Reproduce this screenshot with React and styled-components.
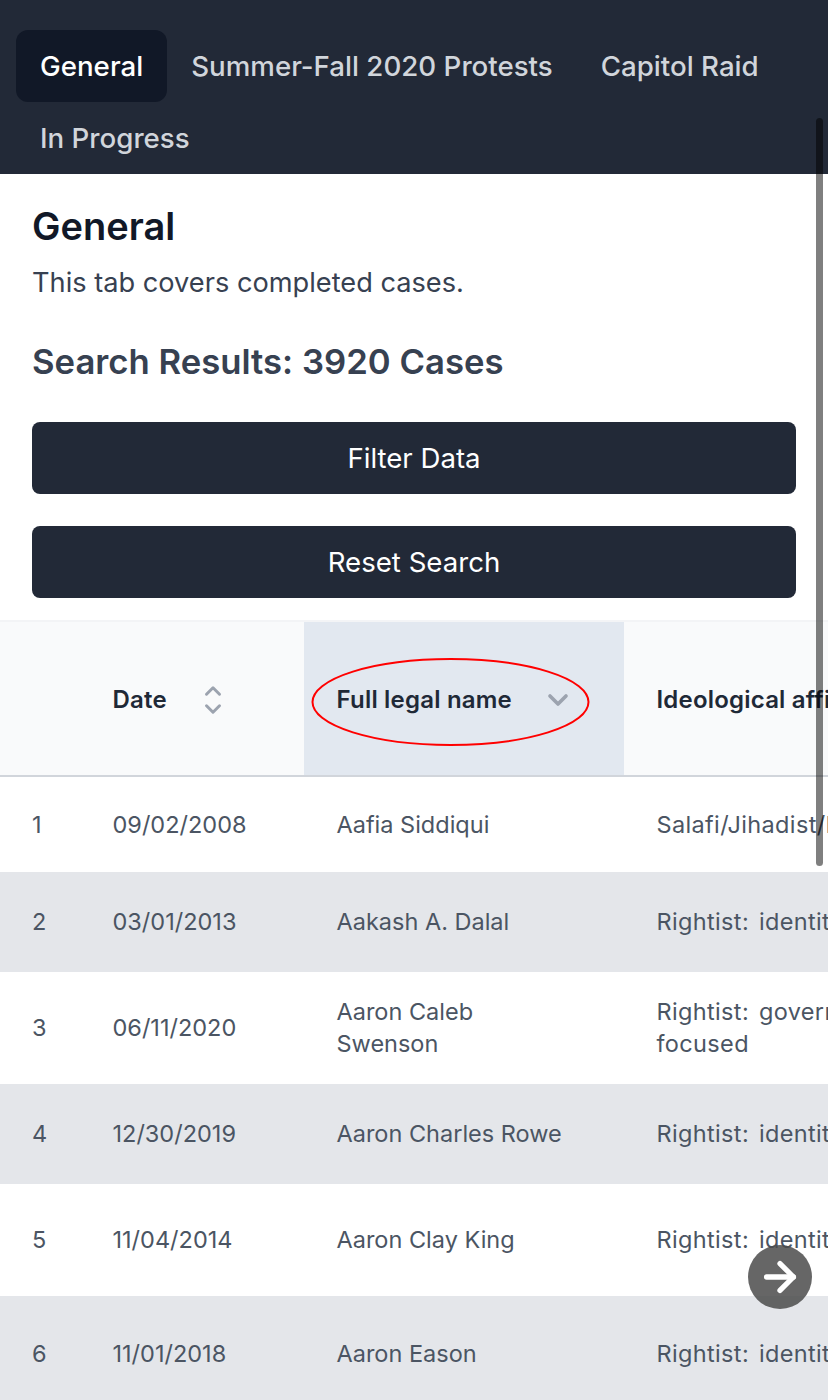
import React from "react";
import styled, { createGlobalStyle } from "styled-components";
import { ArrowRight, ChevronDown, ChevronUp } from "lucide-react";

const tabs = ["General", "Summer-Fall 2020 Protests", "Capitol Raid", "In Progress"];

const rows = [
  { id: 1, date: "09/02/2008", name: "Aafia Siddiqui", ideology: "Salafi/Jihadist/Islamist", height: 96 },
  { id: 2, date: "03/01/2013", name: "Aakash A. Dalal", ideology: "Rightist: identity-focused", height: 100 },
  { id: 3, date: "06/11/2020", name: "Aaron Caleb Swenson", ideology: "Rightist: government-focused", height: 112 },
  { id: 4, date: "12/30/2019", name: "Aaron Charles Rowe", ideology: "Rightist: identity-focused", height: 100 },
  { id: 5, date: "11/04/2014", name: "Aaron Clay King", ideology: "Rightist: identity-focused", height: 112 },
  { id: 6, date: "11/01/2018", name: "Aaron Eason", ideology: "Rightist: identity-focused", height: 116 },
];

const GlobalStyle = createGlobalStyle`
  html, body {
    margin: 0;
    padding: 0;
    background: #fff;
    overflow: hidden;
  }
  body {
    font-family: "Inter", "Liberation Sans", sans-serif;
  }
`;

const Page = styled.div`
  position: relative;
  width: 828px;
  height: 1400px;
  overflow: hidden;
`;

const TabBar = styled.nav`
  display: flex;
  flex-wrap: wrap;
  height: 174px;
  box-sizing: border-box;
  padding: 30px 16px 0;
  background: #222937;
`;

const Tab = styled.div`
  height: 72px;
  padding: 0 24px;
  display: flex;
  align-items: center;
  border-radius: 12px;
  font-size: 27.7px;
  font-weight: 500;
  color: ${(p) => (p.$active ? "#fff" : "#d1d5db")};
  background: ${(p) => (p.$active ? "#111827" : "transparent")};
`;

const Intro = styled.section`
  padding: 28px 32px 0;
`;

const Title = styled.h1`
  margin: 0;
  font-size: 38px;
  line-height: 48px;
  font-weight: 600;
  color: #111827;
`;

const Description = styled.p`
  margin: 13px 0 0;
  font-size: 27.2px;
  line-height: 40px;
  color: #374151;
`;

const ResultCount = styled.h2`
  margin: 34px 0 0;
  font-size: 34.7px;
  line-height: 48px;
  font-weight: 600;
  color: #374151;
`;

const Actions = styled.div`
  display: flex;
  flex-direction: column;
  gap: 32px;
  margin-top: 37px;
`;

const ActionButton = styled.button`
  height: 72px;
  border: 0;
  border-radius: 8px;
  background: #222937;
  color: #fff;
  font-family: inherit;
  font-size: 27.6px;
  font-weight: 400;
`;

const TableWrap = styled.div`
  margin-top: 22px;
  overflow: hidden;
  border-top: 2px solid #f3f4f6;
`;

const Table = styled.table`
  width: 1024px;
  table-layout: fixed;
  border-collapse: collapse;
`;

const HeadCell = styled.th`
  width: ${(p) => p.$width}px;
  height: 154px;
  box-sizing: border-box;
  padding: 2px 0 0 ${(p) => p.$indent}px;
  text-align: left;
  white-space: nowrap;
  font-size: 24px;
  font-weight: 600;
  letter-spacing: 0.2px;
  color: #1f2937;
  background: ${(p) => (p.$active ? "#e2e8f0" : "#f9fafb")};
  border-bottom: 2px solid #d1d5db;
`;

const HeadInner = styled.div`
  display: flex;
  align-items: center;
  gap: 30px;
`;

const SortIcons = styled.span`
  width: 32px;
  display: flex;
  flex-direction: column;
  align-items: center;
  color: #9ca3af;

  svg + svg {
    margin-top: -8px;
  }
`;

const Row = styled.tr`
  height: ${(p) => p.$height}px;
  background: ${(p) => (p.$striped ? "#e4e6ea" : "#fff")};
`;

const Cell = styled.td`
  box-sizing: border-box;
  padding: 0 ${(p) => p.$right || 0}px 0 ${(p) => p.$indent}px;
  font-size: 23.5px;
  line-height: 32px;
  color: #4b5563;
`;

const IdeologyCell = styled(Cell)`
  letter-spacing: 0.35px;
  word-spacing: 3px;
`;

const ScrollThumb = styled.div`
  position: absolute;
  top: 118px;
  left: 816px;
  width: 7px;
  height: 748px;
  border-radius: 4px;
  background: rgba(0, 0, 0, 0.5);
`;

const Annotation = styled.svg`
  position: absolute;
  top: 656px;
  left: 310px;
  pointer-events: none;
`;

const NextButton = styled.button`
  position: absolute;
  top: 1245px;
  left: 748px;
  width: 64px;
  height: 64px;
  padding: 0;
  border: 0;
  border-radius: 50%;
  display: flex;
  align-items: center;
  justify-content: center;
  background: rgba(75, 75, 75, 0.85);
  color: #fff;
`;

export default function App() {
  return (
    <Page>
      <GlobalStyle />
      <TabBar>
        {tabs.map((tab, i) => (
          <Tab key={tab} $active={i === 0}>
            {tab}
          </Tab>
        ))}
      </TabBar>
      <Intro>
        <Title>General</Title>
        <Description>This tab covers completed cases.</Description>
        <ResultCount>Search Results: 3920 Cases</ResultCount>
        <Actions>
          <ActionButton>Filter Data</ActionButton>
          <ActionButton>Reset Search</ActionButton>
        </Actions>
      </Intro>
      <TableWrap>
        <Table>
          <thead>
            <tr>
              <HeadCell $width={80} $indent={32} />
              <HeadCell $width={224} $indent={32.5}>
                <HeadInner>
                  Date
                  <SortIcons>
                    <ChevronUp size={26} strokeWidth={2.75} />
                    <ChevronDown size={26} strokeWidth={2.75} />
                  </SortIcons>
                </HeadInner>
              </HeadCell>
              <HeadCell $width={320} $indent={32.5} $active>
                <HeadInner>
                  Full legal name
                  <SortIcons>
                    <ChevronDown size={32} strokeWidth={2.75} />
                  </SortIcons>
                </HeadInner>
              </HeadCell>
              <HeadCell $width={400} $indent={32.5}>
                Ideological affiliation
              </HeadCell>
            </tr>
          </thead>
          <tbody>
            {rows.map((row, i) => (
              <Row key={row.id} $height={row.height} $striped={i % 2 === 1}>
                <Cell $indent={32}>{row.id}</Cell>
                <Cell $indent={32.5}>{row.date}</Cell>
                <Cell $indent={32.5} $right={48}>
                  {row.name}
                </Cell>
                <IdeologyCell $indent={32.5} $right={40}>
                  {row.ideology}
                </IdeologyCell>
              </Row>
            ))}
          </tbody>
        </Table>
      </TableWrap>
      <ScrollThumb />
      <Annotation width="282" height="92" viewBox="0 0 282 92">
        <ellipse cx="140.5" cy="46" rx="138" ry="43" fill="none" stroke="#f00" strokeWidth="2" />
      </Annotation>
      <NextButton aria-label="Next">
        <ArrowRight size={46} strokeWidth={2.75} />
      </NextButton>
    </Page>
  );
}
